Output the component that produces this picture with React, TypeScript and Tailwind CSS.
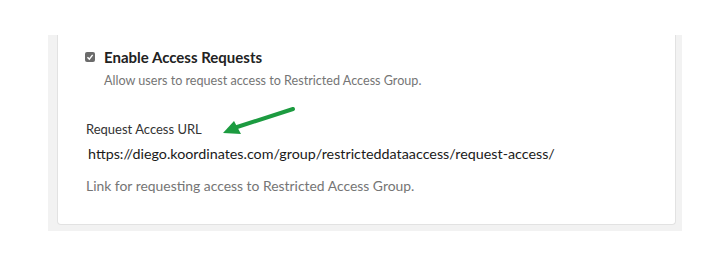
import React from 'react';

export default function App() {
  return (
    <div className="w-[720px] h-[258px] bg-white relative overflow-hidden" style={{ fontFamily: 'Lato, "Open Sans", sans-serif' }}>
      <div className="ml-[48px] mt-[35px] w-[634px] h-[196px] bg-[#f2f2f2] pl-[9px] pr-[6px] pb-[6px]">
        <div className="h-full bg-white border-x border-b border-[#e2e2e2] rounded-b-[4px] pl-[28px] pt-[12px]">
          <div className="flex items-center gap-[9px] h-[20px]">
            <span className="-ml-[1px] w-[10px] h-[10px] rounded-[2px] bg-[#6b6b6b] flex items-center justify-center">
              <svg width="8" height="8" viewBox="0 0 10 10">
                <path d="M1.8 5.2 L4.2 7.6 L8.3 2.4" fill="none" stroke="white" strokeWidth="1.8" />
              </svg>
            </span>
            <span className="text-[15px] font-bold text-[#222]">Enable Access Requests</span>
          </div>
          <p className="ml-[18px] mt-[4px] text-[12.6px] text-[#757575] leading-[20px]">
            Allow users to request access to Restricted Access Group.
          </p>
          <p className="mt-[28px] text-[13px] text-[#333] leading-[20px]">Request Access URL</p>
          <p className="mt-[5px] ml-[2px] text-[14.3px] text-[#1a1a1a] leading-[20px]">
            https://diego.koordinates.com/group/restricteddataaccess/request-access/
          </p>
          <p className="mt-[12px] text-[13.9px] text-[#757575] leading-[20px]">
            Link for requesting access to Restricted Access Group.
          </p>
        </div>
      </div>
      <svg className="absolute left-[220px] top-[104px]" width="80" height="34" viewBox="0 0 80 34">
        <line x1="73" y1="5" x2="14" y2="24" stroke="#1c9b40" strokeWidth="4" strokeLinecap="round" />
        <polygon points="3,29 14,17 21,30" fill="#1c9b40" />
      </svg>
    </div>
  );
}
